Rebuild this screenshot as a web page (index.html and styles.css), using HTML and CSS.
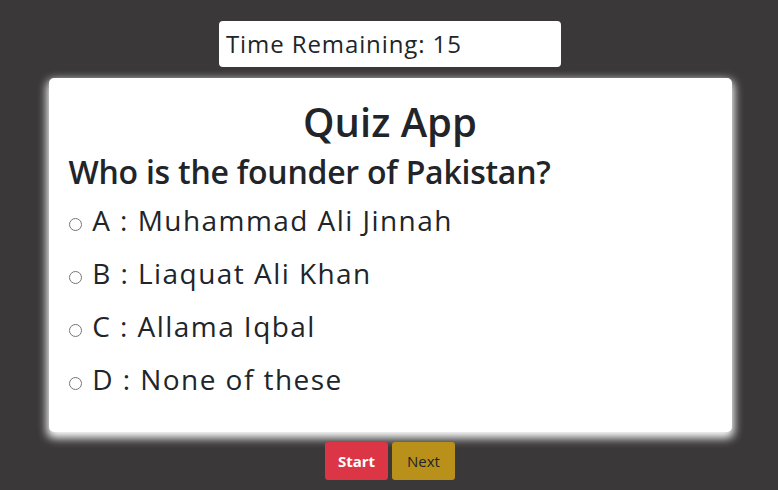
FILE: index.html
```html
<!DOCTYPE html>
<html lang="en">
<head>
  <meta charset="UTF-8">
  <title>Quiz App</title>
  <link rel="stylesheet" href="styles.css">
</head>
<body>
  <div class="timer" id="timer">Time Remaining: 15</div>

  <div class="quiz-card">
    <h1>Quiz App</h1>
    <h2 class="question">Who is the founder of Pakistan?</h2>

    <ul class="options">
      <li><label><input type="radio" name="answer"> A : Muhammad Ali Jinnah</label></li>
      <li><label><input type="radio" name="answer"> B : Liaquat Ali Khan</label></li>
      <li><label><input type="radio" name="answer"> C : Allama Iqbal</label></li>
      <li><label><input type="radio" name="answer"> D : None of these</label></li>
    </ul>
  </div>

  <div class="actions">
    <button class="btn btn-start">Start</button>
    <button class="btn btn-next">Next</button>
  </div>
</body>
</html>
```

FILE: styles.css
```css
* {
  box-sizing: border-box;
}

body {
  margin: 0;
  padding: 0 0 0 2px;
  background: #3a3839;
  color: #212529;
  font-family: 'Open Sans', sans-serif;
}

.timer {
  width: 342px;
  height: 46px;
  margin: 21px auto 0;
  padding: 0 7px;
  background: #fff;
  border-radius: 4px;
  font-size: 24px;
  line-height: 46px;
  letter-spacing: 0.9px;
}

.quiz-card {
  width: 683px;
  height: 354px;
  margin: 11px auto 0;
  padding: 20px 20px;
  background: #fff;
  border-radius: 5px;
  box-shadow: 0 4px 10px 2px #fff;
}

h1 {
  margin: 0;
  text-align: center;
  font-size: 40px;
  font-weight: 600;
  line-height: 48px;
}

.question {
  margin: 6px 0 2px;
  font-size: 32px;
  font-weight: 600;
  line-height: 40px;
  letter-spacing: -0.25px;
}

.options {
  list-style: none;
  margin: 0;
  padding: 0;
}

.options li {
  font-size: 28px;
  line-height: 53px;
  letter-spacing: 1.45px;
}

.options input {
  width: 13px;
  height: 13px;
  margin: 0 2px 0 0;
}

.actions {
  display: flex;
  justify-content: center;
  gap: 4px;
  margin-top: 10px;
}

.btn {
  width: 63px;
  height: 38px;
  border: none;
  border-radius: 3px;
  font-family: inherit;
  font-size: 15px;
  cursor: pointer;
}

.btn-start {
  background: #dc3545;
  color: #fff;
  font-weight: 700;
}

.btn-next {
  background: #b8901a;
  color: #212529;
}
```
